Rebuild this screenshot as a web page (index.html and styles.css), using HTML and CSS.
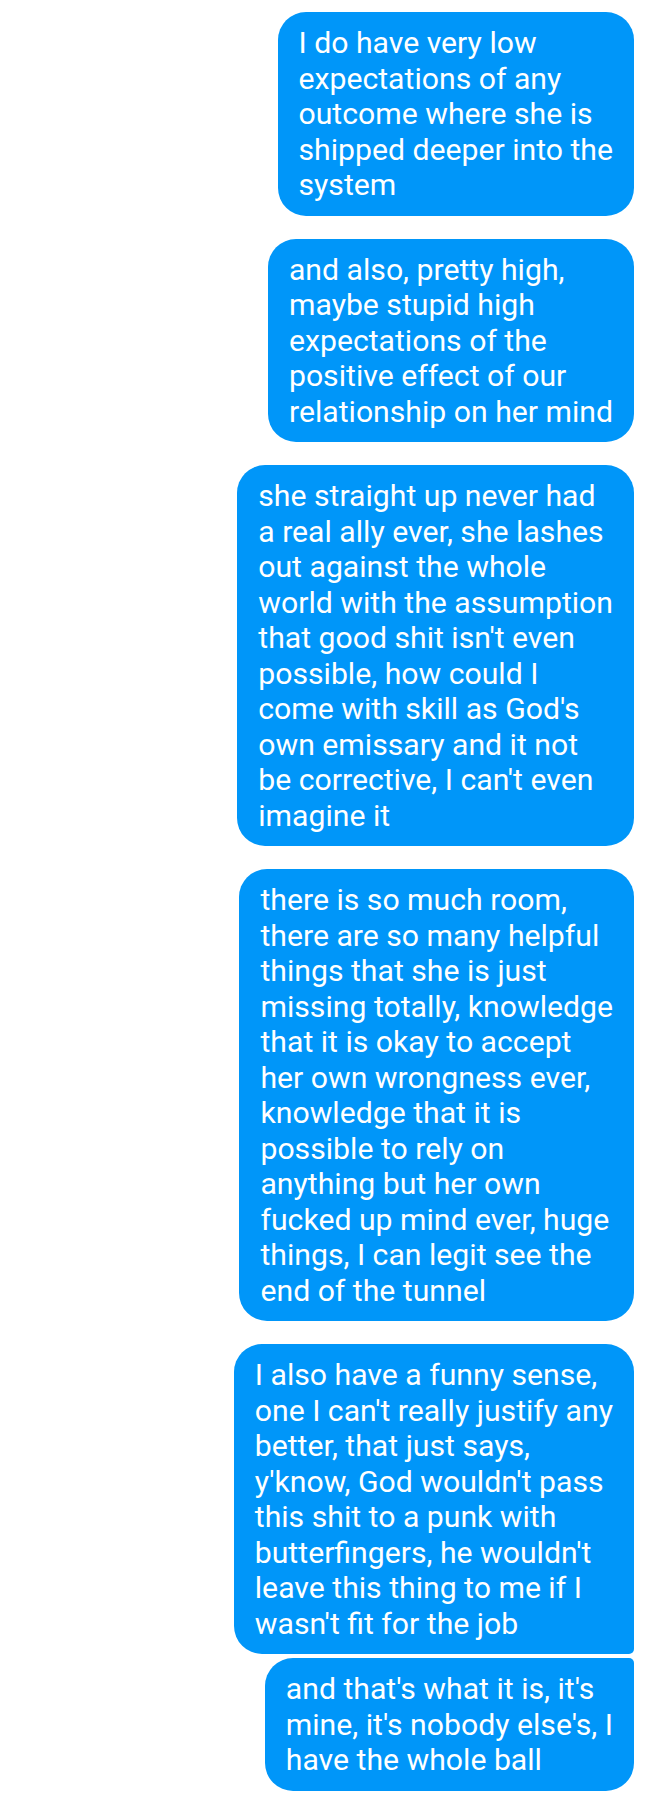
FILE: index.html
```html
<!DOCTYPE html>
<html lang="en">
<head>
<meta charset="utf-8">
<title>Messages</title>
<link rel="stylesheet" href="styles.css">
</head>
<body>
<main class="thread">
  <div class="group">
    <p class="bubble">I do have very low<br>expectations of any<br>outcome where she is<br>shipped deeper into the<br>system</p>
  </div>
  <div class="group">
    <p class="bubble">and also, pretty high,<br>maybe stupid high<br>expectations of the<br>positive effect of our<br>relationship on her mind</p>
  </div>
  <div class="group">
    <p class="bubble">she straight up never had<br>a real ally ever, she lashes<br>out against the whole<br>world with the assumption<br>that good shit isn't even<br>possible, how could I<br>come with skill as God's<br>own emissary and it not<br>be corrective, I can't even<br>imagine it</p>
  </div>
  <div class="group">
    <p class="bubble">there is so much room,<br>there are so many helpful<br>things that she is just<br>missing totally, knowledge<br>that it is okay to accept<br>her own wrongness ever,<br>knowledge that it is<br>possible to rely on<br>anything but her own<br>fucked up mind ever, huge<br>things, I can legit see the<br>end of the tunnel</p>
  </div>
  <div class="group">
    <p class="bubble first">I also have a funny sense,<br>one I can't really justify any<br>better, that just says,<br>y'know, God wouldn't pass<br>this shit to a punk with<br>butterfingers, he wouldn't<br>leave this thing to me if I<br>wasn't fit for the job</p>
    <p class="bubble last">and that's what it is, it's<br>mine, it's nobody else's, I<br>have the whole ball</p>
  </div>
</main>
</body>
</html>
```

FILE: styles.css
```css
html, body {
  margin: 0;
  padding: 0;
  background: #ffffff;
}

.thread {
  display: flex;
  flex-direction: column;
  align-items: flex-end;
  gap: 23px;
  padding: 12px 14px 0 0;
  font-family: Roboto, "Noto Sans", "Liberation Sans", sans-serif;
}

.group {
  display: flex;
  flex-direction: column;
  align-items: flex-end;
  gap: 4px;
}

.bubble {
  margin: 0;
  background: #0096f9;
  color: #ffffff;
  font-size: 30.2px;
  line-height: 35.5px;
  padding: 13px 21px 13px 21px;
  border-radius: 28px;
  white-space: nowrap;
}

.bubble.first {
  border-bottom-right-radius: 5px;
}

.bubble.last {
  border-top-right-radius: 5px;
}
```
